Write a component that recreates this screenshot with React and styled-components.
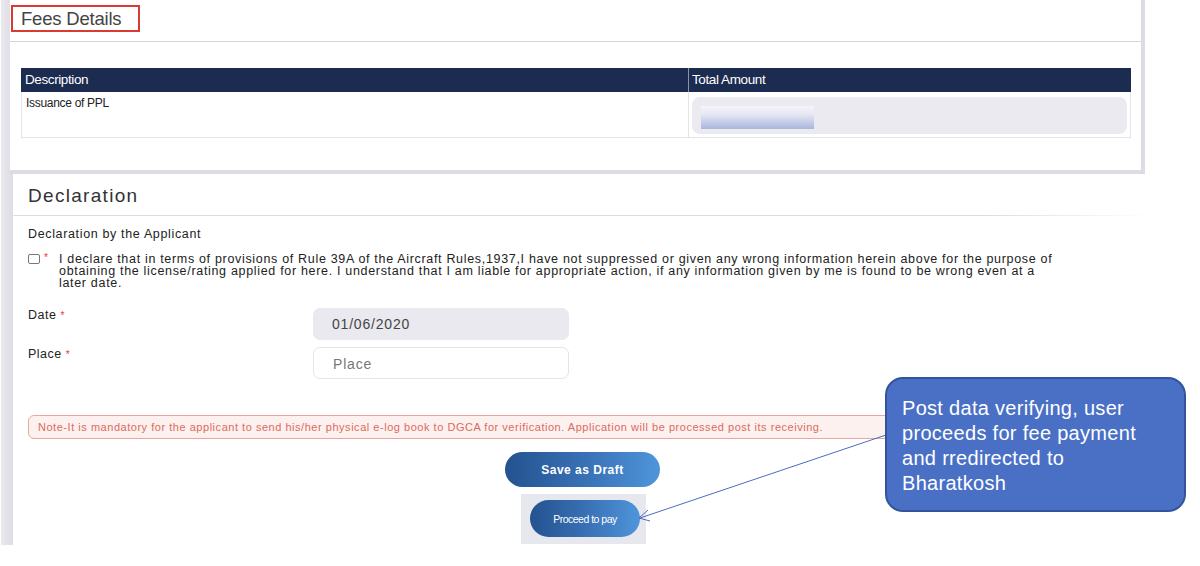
import React from "react";
import styled, { createGlobalStyle } from "styled-components";

const Global = createGlobalStyle`
  html, body { margin: 0; padding: 0; background: #fff; }
  body { font-family: "Liberation Sans", Arial, sans-serif; color: #333; }
  * { box-sizing: border-box; }
`;

const Page = styled.div`
  position: relative;
  width: 1200px;
  height: 566px;
  overflow: hidden;
  background: #fff;
`;

const Frame = styled.div`
  display: flex;
  align-items: flex-start;
`;

const Rail = styled.div`
  width: 12px;
  height: 545px;
  margin-left: 1px;
  flex: none;
  background: linear-gradient(to right, #ebe9ef, #dedce4);
`;

const Content = styled.div`
  display: flex;
  flex-direction: column;
  width: 1140px;
`;

const FeesPanel = styled.section`
  margin-left: -4px;
  width: 1136px;
  height: 174px;
  background: #fff;
  border-left: 1px solid #e2e0e8;
  border-right: 4px solid #dddbe3;
  border-bottom: 4px solid #dddbe3;
  display: flex;
  flex-direction: column;
`;

const PanelHead = styled.div`
  height: 42px;
  border-bottom: 1px solid #d6d4dc;
  padding: 5px 0 0 1px;
`;

const TitleBox = styled.div`
  width: 129px;
  height: 27px;
  border: 2px solid #d93a31;
  padding: 2px 0 0 8px;
  font-size: 18.5px;
  letter-spacing: -0.2px;
  color: #444;
  line-height: 20px;
`;

const Table = styled.div`
  margin: 26px 0 0 11px;
  width: 1110px;
  display: flex;
  flex-direction: column;
`;

const Row = styled.div`
  display: grid;
  grid-template-columns: 667px 1fr;
`;

const HeadCell = styled.div`
  height: 24px;
  background: #1c2b50;
  color: #fff;
  font-size: 13.5px;
  letter-spacing: -0.4px;
  padding: 4px 0 0 ${(p) => (p.$split ? 3 : 4)}px;
  border-left: ${(p) => (p.$split ? "1px solid #8a93ab" : "none")};
`;

const BodyCell = styled.div`
  height: 46px;
  border-bottom: 1px solid #e4e3ea;
  border-left: 1px solid #e4e3ea;
  border-right: ${(p) => (p.$last ? "1px solid #e4e3ea" : "none")};
  font-size: 12px;
  letter-spacing: -0.3px;
  color: #222;
  padding: ${(p) => (p.$pad ? "5px 3px" : "4px 4px")};
`;

const AmountBox = styled.div`
  height: 37px;
  border-radius: 8px;
  background: #ebeaf0;
  padding: 9px 0 0 9px;
`;

const BlurBar = styled.div`
  width: 113px;
  height: 23px;
  background: linear-gradient(to bottom, #f5f5fa 0%, #e6e8f4 35%, #aab5dd 100%);
  filter: blur(0.6px);
`;

const DeclPanel = styled.section`
  margin-top: 1px;
  width: 1138px;
  display: flex;
  flex-direction: column;
`;

const DeclHead = styled.div`
  height: 41px;
  padding: 10px 0 0 15px;
  font-size: 19px;
  letter-spacing: 1.3px;
  color: #333;
  border-bottom: 1px solid transparent;
  border-image: linear-gradient(to right, #dcdbe2 85%, rgba(220, 219, 226, 0)) 1;
`;

const DeclBody = styled.div`
  padding: 11px 0 0 15px;
  display: flex;
  flex-direction: column;
`;

const SubTitle = styled.div`
  font-size: 12.5px;
  letter-spacing: 0.65px;
  color: #222;
`;

const Statement = styled.div`
  margin-top: 12px;
  display: flex;
  align-items: flex-start;
`;

const CheckBox = styled.span`
  width: 12px;
  height: 10px;
  margin-top: 1px;
  border: 1px solid #777;
  border-radius: 2px;
  flex: none;
`;

const Star = styled.span`
  color: #e33;
  font-size: 10px;
  margin: -1px 0 0 4px;
  width: 15px;
  flex: none;
`;

const StatementText = styled.p`
  margin: 0;
  width: 1000px;
  font-size: 12.5px;
  line-height: 12px;
  letter-spacing: 0.68px;
  color: #222;
`;

const FieldRow = styled.div`
  display: flex;
  align-items: flex-start;
  margin-top: ${(p) => p.$mt}px;
`;

const Label = styled.div`
  width: 285px;
  font-size: 12.5px;
  letter-spacing: 0.5px;
  color: #222;
  span { color: #e33; font-size: 10px; }
`;

const Input = styled.div`
  width: 256px;
  height: 32px;
  border-radius: 7px;
  padding: 8px 0 0 19px;
  font-size: 14px;
  letter-spacing: 0.8px;
  color: ${(p) => (p.$filled ? "#444" : "#777")};
  background: ${(p) => (p.$filled ? "#e9e9ef" : "#fff")};
  border: ${(p) => (p.$filled ? "none" : "1.5px solid #e4e3ea")};
`;

const Note = styled.div`
  margin-top: 36px;
  width: 880px;
  height: 24px;
  border: 1px solid #e9a89d;
  border-radius: 6px;
  background: #fcf1ef;
  padding: 5px 0 0 9px;
  font-size: 11px;
  letter-spacing: 0.53px;
  color: #de6a5d;
  white-space: nowrap;
  overflow: hidden;
`;

const ButtonStack = styled.div`
  margin: 13px 0 0 477px;
  width: 156px;
  display: flex;
  flex-direction: column;
`;

const PillButton = styled.button`
  border: none;
  border-radius: 999px;
  background: linear-gradient(to right, #24528f 0%, #3a73b8 55%, #4f95da 100%);
  color: #fff;
  font-family: inherit;
  cursor: pointer;
  width: ${(p) => p.$w}px;
  height: ${(p) => p.$h}px;
  font-size: ${(p) => p.$fs}px;
  font-weight: ${(p) => (p.$bold ? 700 : 400)};
  letter-spacing: ${(p) => p.$ls}px;
  padding: 0;
`;

const Highlight = styled.div`
  margin: 7px 0 0 16px;
  width: 125px;
  height: 50px;
  background: #e7e7ee;
  padding: 6px 0 0 9px;
`;

const Callout = styled.div`
  position: absolute;
  left: 885px;
  top: 377px;
  width: 301px;
  height: 135px;
  border-radius: 18px;
  background: #4a70c6;
  border: 2px solid #34539d;
  color: #fff;
  font-size: 20px;
  letter-spacing: 0.3px;
  line-height: 25px;
  padding: 17px 0 0 15px;
`;

const Arrow = styled.svg`
  position: absolute;
  left: 0;
  top: 0;
  pointer-events: none;
`;

export default function App() {
  return (
    <Page>
      <Global />
      <Frame>
        <Rail />
        <Content>
          <FeesPanel>
            <PanelHead>
              <TitleBox>Fees Details</TitleBox>
            </PanelHead>
            <Table>
              <Row>
                <HeadCell>Description</HeadCell>
                <HeadCell $split>Total Amount</HeadCell>
              </Row>
              <Row>
                <BodyCell>Issuance of PPL</BodyCell>
                <BodyCell $last $pad>
                  <AmountBox>
                    <BlurBar />
                  </AmountBox>
                </BodyCell>
              </Row>
            </Table>
          </FeesPanel>

          <DeclPanel>
            <DeclHead>Declaration</DeclHead>
            <DeclBody>
              <SubTitle>Declaration by the Applicant</SubTitle>
              <Statement>
                <CheckBox />
                <Star>*</Star>
                <StatementText>
                  I declare that in terms of provisions of Rule 39A of the Aircraft Rules,1937,I have not
                  suppressed or given any wrong information herein above for the purpose of obtaining the
                  license/rating applied for here. I understand that I am liable for appropriate action, if
                  any information given by me is found to be wrong even at a later date.
                </StatementText>
              </Statement>
              <FieldRow $mt={19}>
                <Label>
                  Date <span>*</span>
                </Label>
                <Input $filled>01/06/2020</Input>
              </FieldRow>
              <FieldRow $mt={7}>
                <Label>
                  Place <span>*</span>
                </Label>
                <Input>Place</Input>
              </FieldRow>
              <Note>
                Note-It is mandatory for the applicant to send his/her physical e-log book to DGCA for
                verification. Application will be processed post its receiving.
              </Note>
              <ButtonStack>
                <PillButton $w={155} $h={35} $fs={12} $bold $ls={0.5}>
                  Save as Draft
                </PillButton>
                <Highlight>
                  <PillButton $w={110} $h={37} $fs={10.5} $ls={-0.5}>
                    Proceed to pay
                  </PillButton>
                </Highlight>
              </ButtonStack>
            </DeclBody>
          </DeclPanel>
        </Content>
      </Frame>

      <Arrow width="1200" height="566" viewBox="0 0 1200 566">
        <line x1="886" y1="435" x2="640" y2="518" stroke="#4a6cc0" strokeWidth="1" />
        <polyline points="648,510 639,518 650,521" fill="none" stroke="#4a6cc0" strokeWidth="1" />
      </Arrow>

      <Callout>
        Post data verifying, user
        <br />
        proceeds for fee payment
        <br />
        and rredirected to
        <br />
        Bharatkosh
      </Callout>
    </Page>
  );
}
